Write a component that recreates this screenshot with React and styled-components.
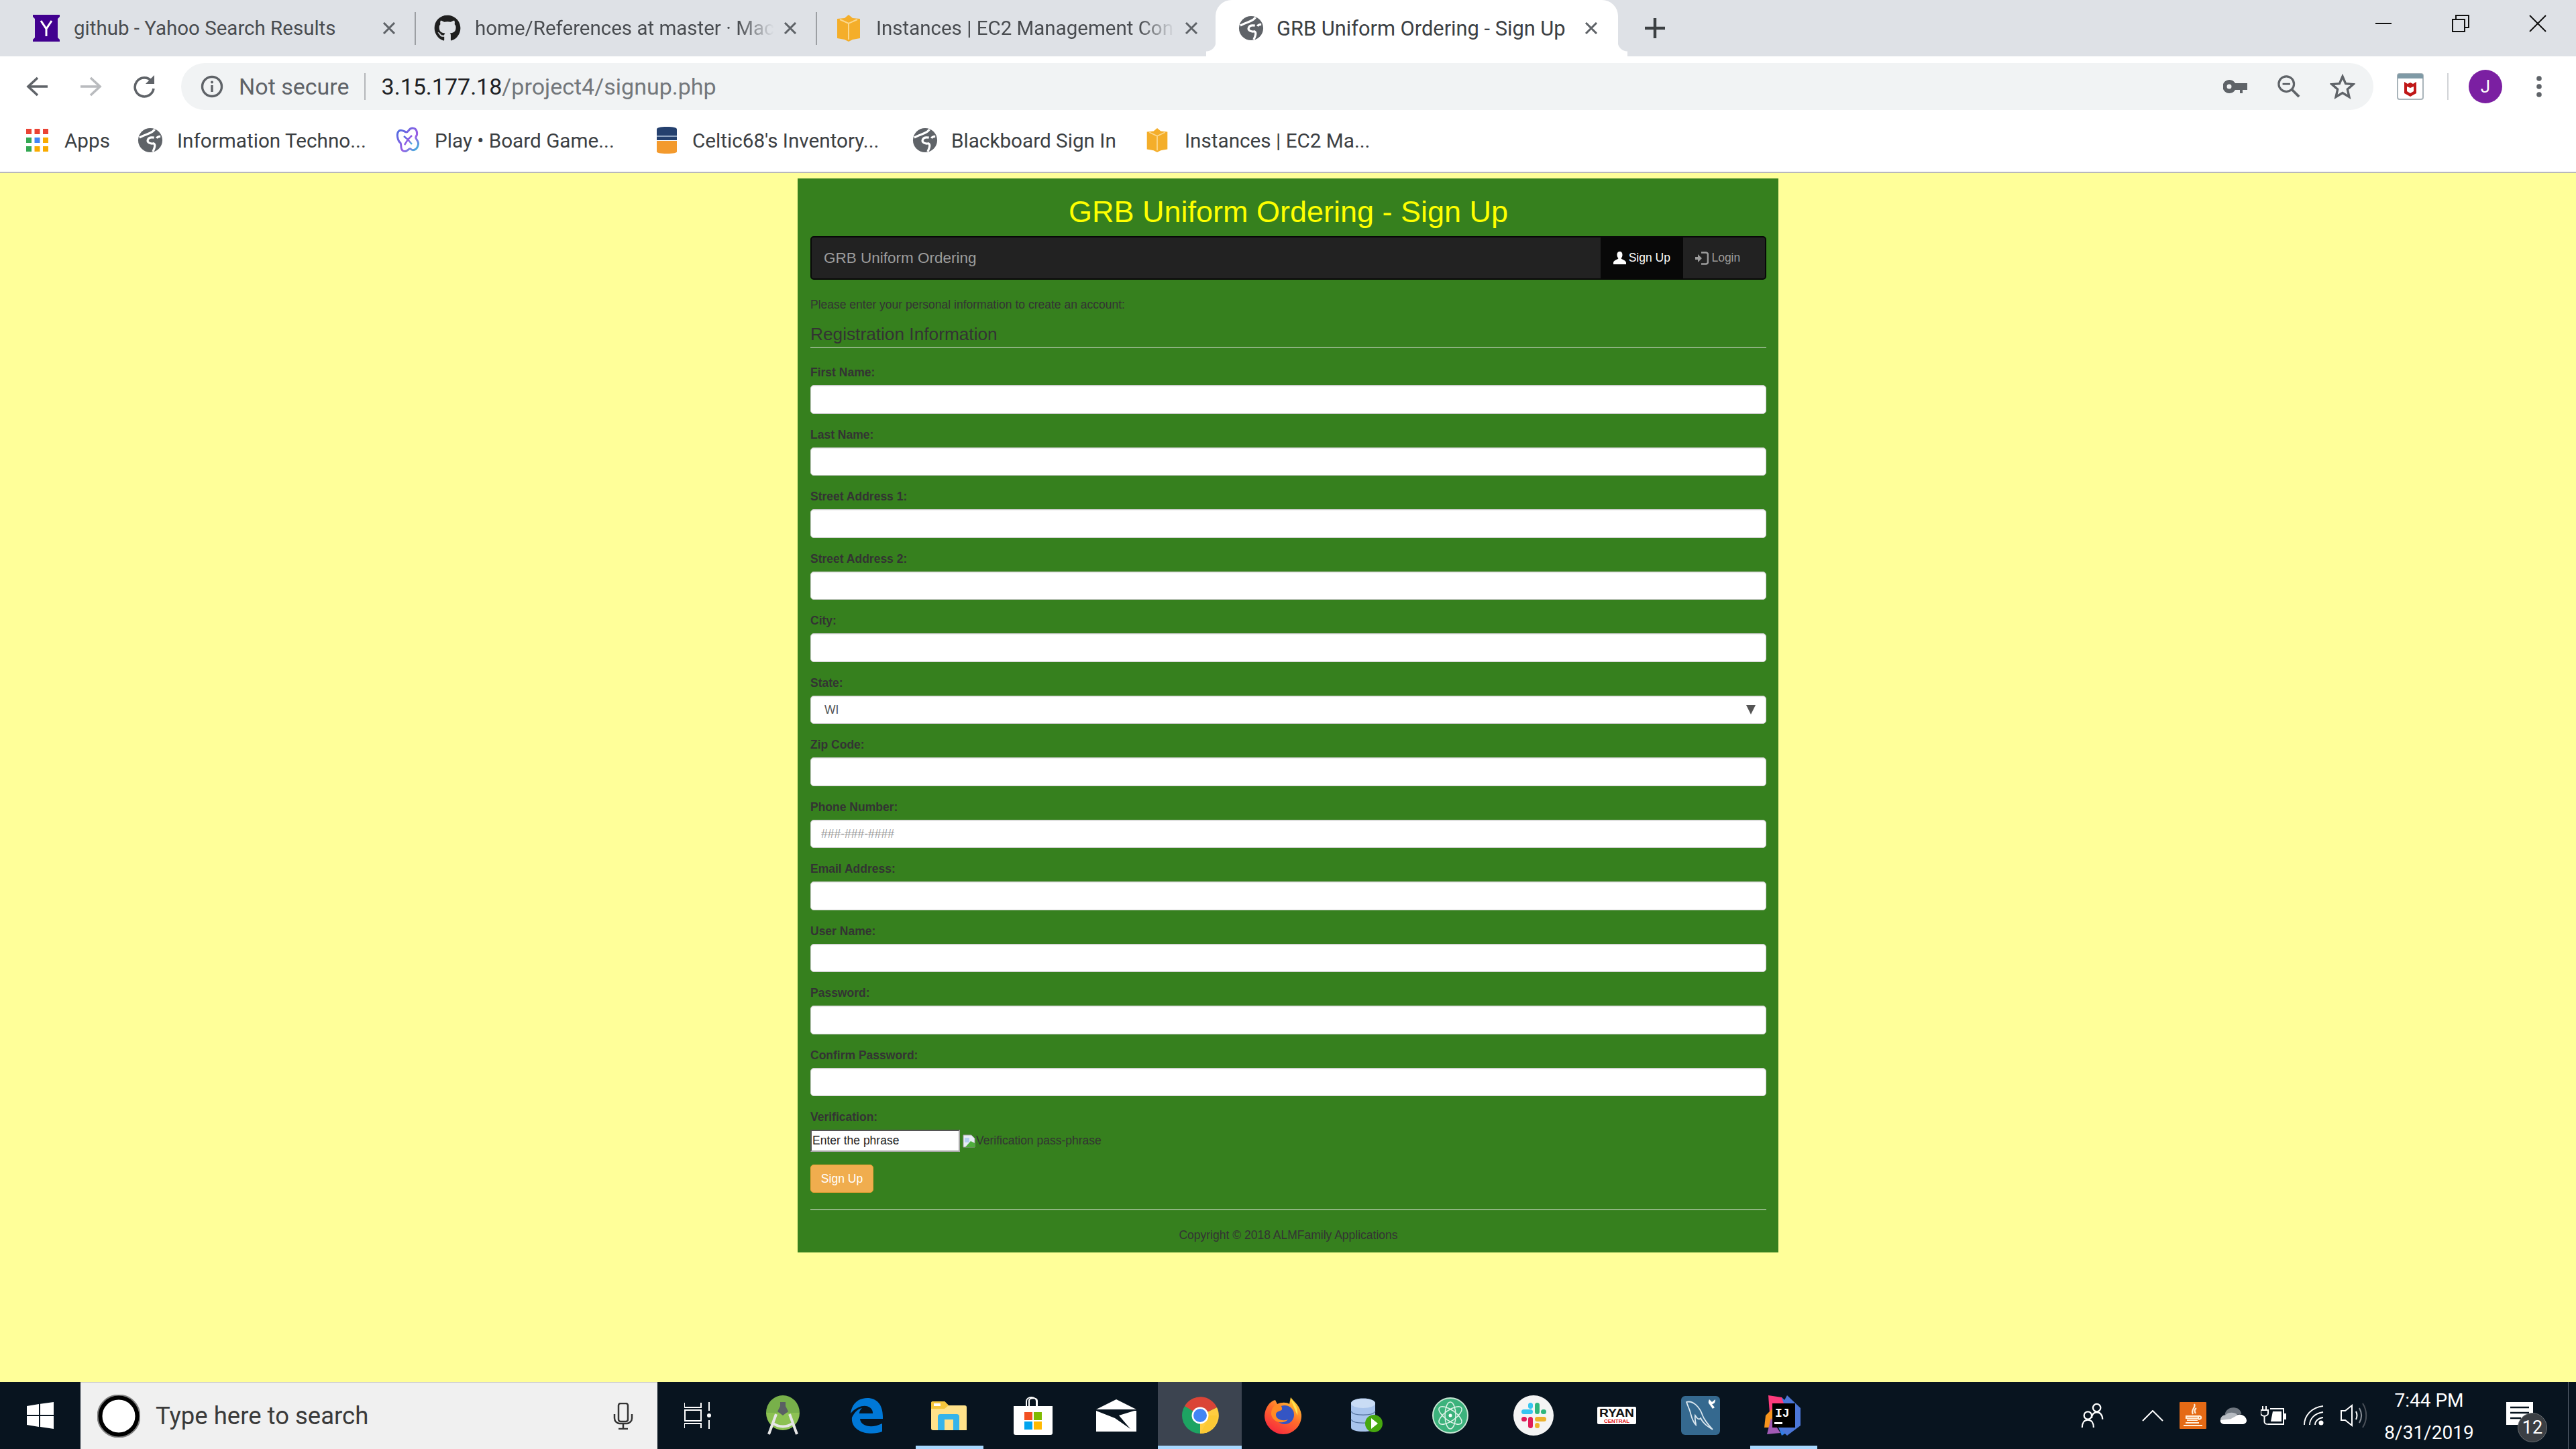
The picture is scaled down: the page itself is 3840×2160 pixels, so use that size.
import React from "react";
import styled, { createGlobalStyle } from "styled-components";
import { FaGithub } from "react-icons/fa";

const GlobalStyle = createGlobalStyle`
  html, body {
    margin: 0;
    padding: 0;
    overflow: hidden;
  }
  * {
    box-sizing: border-box;
  }
`;

const UI_FONT = `Roboto, "Open Sans", sans-serif`;
const WEB_FONT = `"Liberation Sans", Arial, sans-serif`;

const Page = styled.div`
  width: 3840px;
  height: 2160px;
  display: flex;
  flex-direction: column;
  background: #ffff99;
  font-family: ${WEB_FONT};
`;

/* browser chrome */
const TabStrip = styled.div`
  height: 84px;
  flex: none;
  display: flex;
  align-items: center;
  padding-left: 22px;
  background: #dee1e6;
  font-family: ${UI_FONT};
`;

const Tab = styled.div`
  position: relative;
  width: ${p => (p.$active ? "600px" : "596px")};
  height: 84px;
  flex: none;
  display: flex;
  align-items: center;
  padding-left: ${p => (p.$active ? "33px" : "27px")};
  margin-left: ${p => (p.$active ? "-2px" : "0")};
  background: ${p => (p.$active ? "#fff" : "transparent")};
  border-radius: ${p => (p.$active ? "24px 24px 0 0" : "0")};
  z-index: ${p => (p.$active ? 1 : 0)};
  ${p => p.$active && `
    &::before, &::after {
      content: "";
      position: absolute;
      bottom: 0;
      width: 14px;
      height: 22px;
    }
    &::before {
      left: -14px;
      background: radial-gradient(circle at 0 0, transparent 14px, #fff 15px);
    }
    &::after {
      right: -14px;
      background: radial-gradient(circle at 100% 0, transparent 14px, #fff 15px);
    }
  `}
`;

const Favicon = styled.span`
  width: 40px;
  height: 40px;
  flex: none;
  display: flex;
  align-items: center;
  justify-content: center;
  color: #1f1f1f;
`;

const TabTitle = styled.span`
  width: ${p => (p.$active ? "440px" : "446px")};
  margin-left: ${p => (p.$active ? "18px" : "21px")};
  flex: none;
  overflow: hidden;
  white-space: nowrap;
  font-size: ${p => (p.$active ? "30.8px" : "29.5px")};
  color: ${p => (p.$active ? "#3c4043" : "#494c50")};
  ${p => p.$fade && `
    -webkit-mask-image: linear-gradient(to right, #000 88%, transparent 100%);
    mask-image: linear-gradient(to right, #000 88%, transparent 100%);
  `}
`;

const TabClose = styled.span`
  width: 24px;
  height: 24px;
  margin-left: ${p => (p.$active ? "17px" : "12px")};
  flex: none;
  display: flex;
  align-items: center;
  justify-content: center;
`;

const TabDivider = styled.span`
  width: 2px;
  height: 49px;
  flex: none;
  background: #9c9fa3;
`;

const NewTab = styled.span`
  margin-left: 40px;
  display: flex;
`;

const WindowControls = styled.div`
  margin-left: auto;
  align-self: flex-start;
  display: flex;
`;

const WindowButton = styled.span`
  width: 115px;
  height: 70px;
  display: flex;
  align-items: center;
  justify-content: center;
`;

const Toolbar = styled.div`
  height: 90px;
  flex: none;
  display: flex;
  align-items: center;
  padding-left: 15px;
  background: #fff;
  font-family: ${UI_FONT};
`;

const ToolButton = styled.span`
  width: ${p => p.$w || 80}px;
  height: 70px;
  flex: none;
  display: flex;
  align-items: center;
  justify-content: center;
`;

const Omnibox = styled.div`
  width: 3268px;
  height: 70px;
  margin-left: 15px;
  flex: none;
  display: flex;
  align-items: center;
  padding: 0 6px 0 29px;
  border-radius: 35px;
  background: #f1f3f4;
  font-size: 34px;
`;

const NotSecure = styled.span`
  margin-left: 23px;
  color: #5f6368;
`;

const OmniDivider = styled.span`
  width: 2px;
  height: 40px;
  margin: 0 24px 0 22px;
  background: #b4b6b9;
`;

const UrlHost = styled.span`
  color: #202124;
`;

const UrlPath = styled.span`
  color: #73777b;
`;

const OmniActions = styled.div`
  margin-left: auto;
  display: flex;
`;

const ToolDivider = styled.span`
  width: 2px;
  height: 40px;
  background: #d2d4d7;
`;

const Avatar = styled.span`
  width: 50px;
  height: 50px;
  border-radius: 50%;
  display: flex;
  align-items: center;
  justify-content: center;
  background: #7b1fa2;
  color: #fff;
  font-size: 26px;
`;

const Bookmarks = styled.div`
  height: 84px;
  flex: none;
  display: flex;
  align-items: flex-start;
  padding: 0 0 0 39px;
  background: #fff;
  border-bottom: 2px solid #b8b8bb;
  font-family: ${UI_FONT};
`;

const Bookmark = styled.div`
  width: ${p => p.$w}px;
  height: 70px;
  flex: none;
  display: flex;
  align-items: center;
  gap: ${p => p.$gap || 21}px;
  white-space: nowrap;
  font-size: 29.7px;
  color: #3c4043;
`;

/* the web page */
const Main = styled.main`
  flex: 1;
  min-height: 0;
  display: flex;
  justify-content: center;
  align-items: flex-start;
  padding-top: 8px;
`;

const Panel = styled.section`
  width: 1462px;
  padding: 0 18px 12.5px 19px;
  background: #36801e;
  color: #333;
  font-size: 17.5px;
  line-height: 25px;
`;

const Title = styled.h1`
  margin: 0 0 8px;
  padding-top: 21px;
  font-size: 45px;
  line-height: 57px;
  font-weight: normal;
  text-align: center;
  color: #ffff00;
`;

const Navbar = styled.nav`
  height: 65px;
  margin-bottom: 25px;
  display: flex;
  justify-content: space-between;
  background: #222;
  border: 2px solid #080808;
  border-radius: 5px;
`;

const Brand = styled.span`
  padding-left: 18px;
  align-self: center;
  font-size: 22.5px;
  color: #9d9d9d;
`;

const NavLinks = styled.div`
  display: flex;
  padding-right: 18px;
`;

const NavLink = styled.span`
  display: flex;
  align-items: center;
  gap: 4px;
  padding: 0 18.75px;
  background: ${p => (p.$active ? "#080808" : "transparent")};
  color: ${p => (p.$active ? "#fff" : "#9d9d9d")};
`;

const Intro = styled.p`
  margin: 0 0 12.5px;
`;

const Legend = styled.h2`
  margin: 0 0 25px;
  font-size: 26.25px;
  line-height: 37.5px;
  font-weight: normal;
  border-bottom: 1.25px solid #e5e5e5;
`;

const Field = styled.div`
  margin-bottom: 18.75px;
`;

const Label = styled.label`
  display: block;
  margin-bottom: 6.25px;
  font-weight: bold;
`;

const controlStyle = `
  display: block;
  width: 100%;
  height: 42.5px;
  border: 1.25px solid #ccc;
  border-radius: 5px;
  background: #fff;
  box-shadow: inset 0 1px 1px rgba(0, 0, 0, 0.075);
  color: #555;
  font-family: ${WEB_FONT};
  font-size: 17.5px;
  outline: none;
`;

const TextInput = styled.input`
  ${controlStyle}
  padding: 0 15px;
  &::placeholder {
    color: #999;
  }
`;

const SelectWrap = styled.div`
  position: relative;
  &::after {
    content: "";
    position: absolute;
    right: 16px;
    top: 14px;
    border-left: 7px solid transparent;
    border-right: 7px solid transparent;
    border-top: 14px solid #555;
  }
`;

const Select = styled.select`
  ${controlStyle}
  padding: 0 20px;
  appearance: none;
`;

const CaptchaRow = styled.div`
  display: flex;
  align-items: center;
  height: 33px;
`;

const CaptchaInput = styled.input`
  width: 223px;
  height: 33px;
  padding: 0 1px;
  border: 2px inset #a9a9a9;
  background: #fff;
  color: #222;
  font-family: ${WEB_FONT};
  font-size: 17.5px;
  outline: none;
`;

const BrokenImage = styled.span`
  display: flex;
  align-items: center;
  margin-left: 4px;
`;

const SubmitButton = styled.button`
  display: block;
  width: 94px;
  height: 42px;
  padding: 0;
  border: 1.25px solid #eea236;
  border-radius: 5px;
  background: #f0ad4e;
  color: #fff;
  font-family: ${WEB_FONT};
  font-size: 17.5px;
`;

const Rule = styled.hr`
  margin: 25px 0;
  border: 0;
  border-top: 1.25px solid #eee;
`;

const Copyright = styled.footer`
  text-align: center;
`;

/* windows taskbar */
const Taskbar = styled.div`
  height: 100px;
  flex: none;
  display: flex;
  background: #08141f;
  font-family: ${UI_FONT};
`;

const StartButton = styled.span`
  width: 120px;
  flex: none;
  display: flex;
  align-items: center;
  justify-content: center;
`;

const SearchBox = styled.div`
  width: 860px;
  flex: none;
  display: flex;
  align-items: center;
  padding: 0 36px 0 25px;
  background: #f0f0f0;
  border-top: 1px solid #c4c4c4;
  font-size: 36.5px;
  color: #3a3a3a;
`;

const SearchText = styled.span`
  margin-left: 23px;
`;

const SearchMic = styled.span`
  margin-left: auto;
  display: flex;
`;

const TaskItem = styled.div`
  position: relative;
  width: 124.4px;
  flex: none;
  display: flex;
  align-items: center;
  justify-content: center;
  background: ${p => (p.$focused ? "#3c4450" : "transparent")};
  ${p => p.$running && `
    &::after {
      content: "";
      position: absolute;
      left: ${p.$focused ? "0" : "12px"};
      right: ${p.$focused ? "0" : "12px"};
      bottom: 0;
      height: 5px;
      background: #a8d8ff;
    }
  `}
`;

const Tray = styled.div`
  margin-left: auto;
  position: relative;
  display: flex;
  align-items: stretch;
  padding-right: 31px;
`;

const TraySlot = styled.span`
  width: ${p => p.$w || 60}px;
  display: flex;
  align-items: center;
  justify-content: center;
`;

const Clock = styled.div`
  width: 164px;
  padding-top: 4px;
  display: flex;
  flex-direction: column;
  justify-content: center;
  align-items: center;
  font-size: 28px;
  line-height: 48px;
  color: #fff;
`;

const Notifications = styled.span`
  position: relative;
  width: 106px;
  padding-bottom: 6px;
  display: flex;
  align-items: center;
  justify-content: center;
`;

const Badge = styled.span`
  position: absolute;
  left: 50px;
  top: 46px;
  width: 44px;
  height: 44px;
  border-radius: 50%;
  display: flex;
  align-items: center;
  justify-content: center;
  background: #3b3f44;
  border: 1px solid #6a6e72;
  color: #fff;
  font-size: 27px;
`;

const ShowDesktop = styled.span`
  position: absolute;
  right: 11px;
  bottom: 0;
  width: 1px;
  height: 100px;
  background: #5a6470;
`;

/* drawings */
const YahooIcon = () => (
  <svg width="40" height="40" viewBox="0 0 40 40">
    <path d="M0 0h40v3l-3 3v28l3 3v3H0v-3l3-3V6L0 3z" fill="#41008f" />
    <path d="M12 9l8 12 8-12M20 21v11" fill="none" stroke="#fff" strokeWidth="3" />
  </svg>
);

const GlobeIcon = ({ size = 38 }) => (
  <svg width={size} height={size} viewBox="0 0 40 40">
    <circle cx="20" cy="20" r="19" fill="#5f6368" />
    <path d="M3 16c6-4 12-5 16-7 4-2 6-3 8-6M26 16c-5-1-9 0-10 4-1 4 5 6 9 5 3 1 3 5-1 13M36 14c-3 0-5 1-6 3" fill="none" stroke="#fff" strokeWidth="3.4" />
  </svg>
);

const AwsBoxIcon = ({ size = 40 }) => (
  <svg width={size} height={size} viewBox="0 0 40 40">
    <path d="M20 0l6 5 11 1v29l-11 2-6 3-6-3-11-2V6l11-1z" fill="#f4ae2a" />
    <path d="M7 7l13 6 13-6M20 13v24" fill="none" stroke="#fbd88d" strokeWidth="2" />
  </svg>
);

const PlayIcon = () => (
  <svg width="40" height="40" viewBox="0 0 40 40">
    <defs>
      <linearGradient id="playGrad" x1="0" y1="0" x2="1" y2="1">
        <stop offset="0" stopColor="#4a6ee0" />
        <stop offset="0.6" stopColor="#9b5de5" />
        <stop offset="1" stopColor="#2fc4d9" />
      </linearGradient>
    </defs>
    <path d="M6 6c4-3 8 2 11 2 3 0 3-6 9-6 7 0 8 9 5 13-2 3 6 6 3 13-2 7-8 8-11 5-3-2-5 6-11 3-5-3-2-9-4-12C4 21 1 10 6 6z" fill="#fff" stroke="url(#playGrad)" strokeWidth="3" />
    <path d="M13 14l6 5m6-6l-6 6-5 8m5-8l6 7" fill="none" stroke="url(#playGrad)" strokeWidth="2.5" />
  </svg>
);

const CelticIcon = () => (
  <svg width="34" height="40" viewBox="0 0 34 40">
    <path d="M2 4c0-3 5-4 15-4s15 1 15 4v16H2z" fill="#24406e" />
    <rect x="2" y="13" width="30" height="2" fill="#8ea3c0" />
    <path d="M2 21h30v16c0 2-5 3-15 3S2 39 2 37z" fill="#f39a2d" />
  </svg>
);

const AppsIcon = () => {
  const colors = ["#ea4335", "#ea4335", "#ea4335", "#34a853", "#4285f4", "#f9ab00", "#34a853", "#f9ab00", "#f9ab00"];
  return (
    <svg width="33" height="34" viewBox="0 0 33 34">
      {colors.map((c, i) => (
        <rect key={i} x={(i % 3) * 12.5} y={Math.floor(i / 3) * 13} width="8" height="8" fill={c} />
      ))}
    </svg>
  );
};

const CloseX = () => (
  <svg width="20" height="18" viewBox="0 0 20 18">
    <path d="M2 1l16 16M18 1L2 17" stroke="#5f6368" strokeWidth="3" fill="none" />
  </svg>
);

const PlusIcon = () => (
  <svg width="30" height="30" viewBox="0 0 30 30">
    <path d="M15 0v30M0 15h30" stroke="#3c4043" strokeWidth="4.4" />
  </svg>
);

const MinimizeIcon = () => (
  <svg width="26" height="26" viewBox="0 0 26 26">
    <path d="M1 13h24" stroke="#111" strokeWidth="2" />
  </svg>
);

const RestoreIcon = () => (
  <svg width="26" height="26" viewBox="0 0 26 26">
    <path d="M1 7h18v18H1zM6 7V1h19v18h-6" fill="none" stroke="#111" strokeWidth="2" />
  </svg>
);

const WindowCloseIcon = () => (
  <svg width="26" height="26" viewBox="0 0 26 26">
    <path d="M1 1l24 24M25 1L1 25" fill="none" stroke="#111" strokeWidth="2" />
  </svg>
);

const BackIcon = ({ color = "#5f6368" }) => (
  <svg width="33" height="30" viewBox="0 0 33 30">
    <path d="M32 15H4M17 2L3 15l14 13" fill="none" stroke={color} strokeWidth="3.6" />
  </svg>
);

const ForwardIcon = () => (
  <svg width="33" height="30" viewBox="0 0 33 30">
    <path d="M1 15h28M16 2l14 13-14 13" fill="none" stroke="#b9bbbe" strokeWidth="3.6" />
  </svg>
);

const ReloadIcon = () => (
  <svg width="36" height="34" viewBox="0 0 36 34">
    <path d="M29 9a14 14 0 1 0 3 11" fill="none" stroke="#5f6368" strokeWidth="3.6" />
    <path d="M33 0v13H20z" fill="#5f6368" />
  </svg>
);

const InfoIcon = () => (
  <svg width="34" height="34" viewBox="0 0 34 34">
    <circle cx="17" cy="17" r="14.5" fill="none" stroke="#5f6368" strokeWidth="3.4" />
    <path d="M17 15v10" stroke="#5f6368" strokeWidth="3.4" />
    <circle cx="17" cy="10.5" r="2" fill="#5f6368" />
  </svg>
);

const KeyIcon = () => (
  <svg width="36" height="20" viewBox="0 0 36 20">
    <path d="M18 5a10 10 0 1 0 0 10h7v5h4v-5h7V5z" fill="#5f6368" />
    <circle cx="9" cy="10" r="3.500" fill="#f1f3f4" />
  </svg>
);

const ZoomOutIcon = () => (
  <svg width="34" height="34" viewBox="0 0 36 36">
    <circle cx="14" cy="14" r="12" fill="none" stroke="#5f6368" strokeWidth="3.4" />
    <path d="M8 14h12" stroke="#5f6368" strokeWidth="3" />
    <path d="M23 23l11 11" stroke="#5f6368" strokeWidth="4" />
  </svg>
);

const StarIcon = () => (
  <svg width="38" height="38" viewBox="0 0 38 38">
    <path d="M19 4l4.6 10.6 11.4 1-8.7 7.6 2.6 11.2L19 28.5l-9.9 5.9 2.6-11.2L3 15.6l11.4-1z" fill="none" stroke="#5f6368" strokeWidth="3.4" />
  </svg>
);

const McAfeeIcon = () => (
  <svg width="40" height="40" viewBox="0 0 40 40">
    <rect x="1" y="1" width="38" height="38" rx="3" fill="#fff" stroke="#a9b4ba" strokeWidth="2" />
    <path d="M1 4a3 3 0 0 1 3-3h32a3 3 0 0 1 3 3v4H1z" fill="#7f9aa6" />
    <path d="M11 13l5 3 4-2 4 2 5-3v17l-9 5-9-5z" fill="#c01818" />
    <path d="M15 20l5 2 5-2v7l-5 3-5-3z" fill="#fff" />
  </svg>
);

const DotsIcon = () => (
  <svg width="10" height="32" viewBox="0 0 10 32">
    <circle cx="5" cy="4" r="3.800" fill="#5f6368" />
    <circle cx="5" cy="16" r="3.800" fill="#5f6368" />
    <circle cx="5" cy="28" r="3.800" fill="#5f6368" />
  </svg>
);

const UserGlyph = () => (
  <svg width="19" height="19" viewBox="0 0 19 19">
    <path d="M9.5 0c3 0 4 2.2 4 5 0 2.4-1 4-2 5 0 1.500 7.500 3 7.500 6.500V19H0v-2.500C0 13 7.500 11.500 7.500 10c-1-1-2-2.600-2-5 0-2.800 1-5 4-5z" fill="#fff" />
  </svg>
);

const LoginGlyph = () => (
  <svg width="20" height="20" viewBox="0 0 20 20">
    <path d="M0 8h4V4l6 6-6 6v-4H0z" fill="#9d9d9d" />
    <path d="M9 1.500h7a3 3 0 0 1 3 3v11a3 3 0 0 1-3 3H9" fill="none" stroke="#9d9d9d" strokeWidth="2.600" />
  </svg>
);

const BrokenImageIcon = () => (
  <svg width="20" height="20" viewBox="0 0 20 20">
    <path d="M1 1h12l5 5v13H1z" fill="#e8eef5" stroke="#a0a0a0" />
    <path d="M3 5h7v7H3z" fill="#b8d0f0" />
    <path d="M4 19l8-9 6 3v6z" fill="#4fae3c" />
  </svg>
);

const WindowsLogo = () => (
  <svg width="40" height="40" viewBox="0 0 40 40">
    <path d="M0 6l18-3v16H0zM20 2.700L40 0v19H20zM0 21h18v16L0 34zM20 21h20v19l-20-3z" fill="#fff" />
  </svg>
);

const CortanaIcon = () => (
  <svg width="64" height="64" viewBox="0 0 64 64">
    <circle cx="32" cy="32" r="28" fill="#fff" stroke="#000" strokeWidth="7" />
    <circle cx="32" cy="32" r="31.500" fill="none" stroke="#808080" strokeWidth="2" />
  </svg>
);

const MicIcon = () => (
  <svg width="30" height="40" viewBox="0 0 30 40">
    <rect x="8" y="1" width="14" height="27" rx="3" fill="none" stroke="#333" strokeWidth="2.500" />
    <path d="M2 17v6a8 8 0 0 0 8 8h10a8 8 0 0 0 8-8v-6M15 31v8M8 39h14" fill="none" stroke="#333" strokeWidth="2.500" />
  </svg>
);

const TaskViewIcon = () => (
  <svg width="44" height="40" viewBox="0 0 44 40">
    <path d="M0 1v7h25V1M1 12h24v16H1zM0 39v-7h25v7M37 0v13M37 27v13" fill="none" stroke="#fff" strokeWidth="2" />
    <circle cx="37" cy="20" r="3" fill="#fff" />
  </svg>
);

const AndroidStudioIcon = () => (
  <svg width="56" height="60" viewBox="0 0 56 60">
    <path d="M3 26a25 26 0 0 1 50 0z" fill="#78b04a" />
    <path d="M3 26h50a25 26 0 0 1-50 0z" fill="#8cc152" />
    <path d="M24 10h8v6l4 8-8 6-8-6 4-8z" fill="#5a5f63" />
    <path d="M18 28L7 58M38 28l11 30M14 42c8 6 20 6 28 0" fill="none" stroke="#e6e6e6" strokeWidth="4" />
  </svg>
);

const EdgeIcon = () => (
  <svg width="52" height="54" viewBox="0 0 52 54">
    <path d="M3 24C5 8 16 1 28 1c14 0 24 10 23 31H17c1 11 17 15 33 7v12C32 58 3 52 5 30 10 20 15 17 20 16c-3 3-4 5-4 8h20c1-12-18-18-33 0z" fill="#0078d7" />
  </svg>
);

const ExplorerIcon = () => (
  <svg width="54" height="44" viewBox="0 0 54 44">
    <path d="M0 4a3 3 0 0 1 3-3h17l6 6h24a3 3 0 0 1 3 3v34H3a3 3 0 0 1-3-3z" fill="#ffe28a" />
    <path d="M0 4a3 3 0 0 1 3-3h17l6 6-6 5H0z" fill="#f6c63c" />
    <rect x="4" y="4" width="10" height="4" fill="#fff" />
    <path d="M10 44V24a4 4 0 0 1 4-4h24a4 4 0 0 1 4 4v20h-9V28H20v16z" fill="#35b4ea" />
  </svg>
);

const StoreIcon = () => (
  <svg width="58" height="58" viewBox="0 0 58 58">
    <path d="M19 15V8c0-8 15-8 15 0v7M23 15V7c0-5 12-5 12 0v8" fill="none" stroke="#fff" strokeWidth="2" />
    <path d="M0 15h58v40a3 3 0 0 1-3 3H3a3 3 0 0 1-3-3z" fill="#fff" />
    <rect x="16" y="24" width="12" height="12" fill="#f25022" />
    <rect x="30" y="24" width="12" height="12" fill="#7fba00" />
    <rect x="16" y="38" width="12" height="12" fill="#00a4ef" />
    <rect x="30" y="38" width="12" height="12" fill="#ffb900" />
  </svg>
);

const MailIcon = () => (
  <svg width="60" height="48" viewBox="0 0 60 48">
    <path d="M0 15L30 0l30 15H0zM0 17h60v31H0z" fill="#fff" />
    <path d="M0 16h60L34 24l17 20L28 28 0 17z" fill="#08141f" />
  </svg>
);

const ChromeIcon = () => (
  <svg width="56" height="56" viewBox="0 0 56 56">
    <circle cx="28" cy="28" r="27" fill="#1da462" />
    <path d="M28 28L53 16A27 27 0 0 1 28 55z" fill="#ffcd40" />
    <path d="M28 28L5 14A27 27 0 0 1 53 16z" fill="#db4437" />
    <path d="M28 28H53A25 25 0 0 1 28 55L40 34z" fill="#fcc934" />
    <circle cx="28" cy="28" r="12.500" fill="#fff" />
    <circle cx="28" cy="28" r="10" fill="#4285f4" />
  </svg>
);

const FirefoxIcon = () => (
  <svg width="58" height="58" viewBox="0 0 58 58">
    <defs>
      <linearGradient id="foxGrad" x1="0.8" y1="0" x2="0.2" y2="1">
        <stop offset="0" stopColor="#ffd535" />
        <stop offset="0.45" stopColor="#ff6f2b" />
        <stop offset="1" stopColor="#f6223f" />
      </linearGradient>
    </defs>
    <path d="M40 2c6 8 14 12 16 26 1 16-12 29-27 29S1 44 1 29C2 18 8 8 17 6l3 6c6-3 14-3 18 0z" fill="url(#foxGrad)" />
    <circle cx="31" cy="28" r="14" fill="#3455c4" />
    <path d="M16 14c8-4 12 2 11 6-1 3-10 2-9 9 1 6 10 9 18 6-8 9-24 3-25-8 0-6 2-10 5-13z" fill="#ff8a24" />
    <path d="M40 4c8 8 11 16 10 25-3-7-6-14-10-25z" fill="#ffe34e" />
  </svg>
);

const DatabaseIcon = () => (
  <svg width="50" height="52" viewBox="0 0 50 52">
    <path d="M2 8c0-10 36-10 36 0v36c0 8-36 8-36 0z" fill="#a8c4ec" />
    <ellipse cx="20" cy="8" rx="18" ry="7" fill="#c9dcf5" />
    <path d="M2 20c4 7 32 7 36 0M2 32c4 7 32 7 36 0" fill="none" stroke="#55749f" strokeWidth="1.500" />
    <circle cx="36" cy="38" r="13" fill="#46a80f" />
    <path d="M32 30l10 8-10 8z" fill="#fff" />
  </svg>
);

const AtomIcon = () => (
  <svg width="54" height="54" viewBox="0 0 54 54">
    <circle cx="27" cy="27" r="26" fill="#3cb27c" stroke="#c8e6d4" strokeWidth="2" />
    <g fill="none" stroke="#dff3e8" strokeWidth="1.500">
      <ellipse cx="27" cy="27" rx="20" ry="8" transform="rotate(35 27 27)" />
      <ellipse cx="27" cy="27" rx="20" ry="8" transform="rotate(-35 27 27)" />
      <ellipse cx="27" cy="27" rx="20" ry="8" transform="rotate(90 27 27)" />
    </g>
    <circle cx="27" cy="27" r="2.500" fill="#fff" />
  </svg>
);

const SlackIcon = () => (
  <svg width="60" height="60" viewBox="0 0 60 60">
    <circle cx="30" cy="30" r="30" fill="#f4f4f4" />
    <rect x="12" y="21" width="17" height="7" rx="3.500" fill="#36c5f0" />
    <rect x="22" y="11" width="7" height="9" rx="3.500" fill="#36c5f0" />
    <rect x="32" y="11" width="7" height="17" rx="3.500" fill="#2eb67d" />
    <rect x="41" y="21" width="8" height="7" rx="3.500" fill="#2eb67d" />
    <rect x="32" y="32" width="17" height="7" rx="3.500" fill="#ecb22e" />
    <rect x="32" y="41" width="7" height="8" rx="3.500" fill="#ecb22e" />
    <rect x="22" y="32" width="7" height="17" rx="3.500" fill="#e01e5a" />
    <rect x="12" y="32" width="8" height="7" rx="3.500" fill="#e01e5a" />
  </svg>
);

const RyanIcon = () => (
  <svg width="58" height="26" viewBox="0 0 58 26">
    <rect width="58" height="26" rx="2" fill="#fff" />
    <text x="3" y="15" fontFamily="Liberation Sans" fontWeight="bold" fontSize="17" textLength="52" lengthAdjust="spacingAndGlyphs" fill="#111">RYAN</text>
    <text x="29" y="24" fontFamily="Liberation Sans" fontWeight="bold" fontSize="8" textAnchor="middle" fill="#e3101a">CENTRAL</text>
  </svg>
);

const MysqlIcon = () => (
  <svg width="58" height="58" viewBox="0 0 58 58">
    <rect width="58" height="58" rx="6" fill="#35698f" />
    <path d="M8 9c10-3 20 8 24 20 3 8 9 14 15 21-8-5-14-9-18-17-2 3-5 1-8-4-1 6 1 10 1 14-6-6-7-15-9-21z" fill="none" stroke="#dbe7ef" strokeWidth="1.800" />
    <path d="M42 5l4 4 5-4c0 5-2 7-5 7l4 5-3 2-5-7c-2-2-1-5 0-7z" fill="#fff" />
  </svg>
);

const IntellijIcon = () => (
  <svg width="62" height="60" viewBox="0 0 62 60">
    <path d="M28 3l20 19v26L28 60l-8-20z" fill="#2f7fe8" />
    <path d="M36 0l20 19v26L36 60 14 40z" fill="#4b76d8" />
    <path d="M8 0l20 3 6 18-24 6z" fill="#fd3b7c" />
    <path d="M4 30l10-10 4 28H2z" fill="#f7941d" />
    <path d="M6 58l6-24 14 22z" fill="#a25ab5" />
    <rect x="14" y="12" width="34" height="36" fill="#000" />
    <text x="18" y="32" fontFamily="Liberation Mono" fontWeight="bold" fontSize="18" fill="#fff">IJ</text>
    <rect x="17" y="40" width="12" height="3" fill="#fff" />
  </svg>
);

const PeopleIcon = () => (
  <svg width="36" height="38" viewBox="0 0 36 40">
    <g fill="none" stroke="#fff" strokeWidth="2.400">
      <circle cx="25" cy="8" r="6" />
      <path d="M17 24c0-5 3-9 8-9s9 4 9 11" />
      <circle cx="11" cy="20" r="6" />
      <path d="M2 39c0-7 3-12 9-12s9 5 9 12" />
    </g>
  </svg>
);

const ChevronIcon = () => (
  <svg width="32" height="17" viewBox="0 0 32 17">
    <path d="M1 16L16 1l15 15" fill="none" stroke="#fff" strokeWidth="2" />
  </svg>
);

const JavaIcon = () => (
  <svg width="40" height="40" viewBox="0 0 40 40">
    <rect width="40" height="40" rx="1" fill="#e56a15" />
    <path d="M22 3c3 5-6 8-2 15M25 9c-3 2-3 5-1 8M10 21h18v3H10zM28 21c5-1 6 4 0 5M11 27h16M9 31h20M6 35h28" fill="none" stroke="#fff0dd" strokeWidth="2.200" />
  </svg>
);

const CloudIcon = () => (
  <svg width="40" height="26" viewBox="0 0 42 34" preserveAspectRatio="none">
    <path d="M8 16C8 7 16 0 24 2c6 1 9 6 10 12z" fill="#6f7780" />
    <path d="M1 26c0-6 4-10 8-10 4-6 14-6 18-1 6 0 11 5 12 11z" fill="#b7bcc2" />
    <path d="M1 26c-1 5 3 8 7 8h27c4 0 7-3 7-7 0-6-5-12-12-12L17 24z" fill="#fff" />
  </svg>
);

const BatteryIcon = () => (
  <svg width="38" height="28" viewBox="0 0 38 28">
    <path d="M3 0v6M8 0v6" stroke="#fff" strokeWidth="2" />
    <path d="M0 6h11v5c0 2-3 4-5.500 4S0 13 0 11zM5.500 15v8a4 4 0 0 0 4 4" fill="none" stroke="#fff" strokeWidth="2" />
    <path d="M14 4h20v23H10" fill="none" stroke="#fff" strokeWidth="2" />
    <path d="M15 23l3-15h13v15z" fill="#fff" />
    <rect x="35" y="11" width="3" height="9" fill="#fff" />
  </svg>
);

const WifiIcon = () => (
  <svg width="30" height="30" viewBox="0 0 30 30">
    <g fill="none" stroke="#fff" strokeWidth="1.800">
      <path d="M1 29C1 15 12 3 29 1" />
      <path d="M9 29c0-9 7-17 20-19" />
      <path d="M17 29c0-5 4-10 12-11" />
    </g>
    <circle cx="26" cy="26" r="3.500" fill="#fff" />
  </svg>
);

const VolumeIcon = () => (
  <svg width="40" height="38" viewBox="0 0 40 38">
    <path d="M1 12h6l10-8v30L7 26H1z" fill="none" stroke="#fff" strokeWidth="2" />
    <path d="M23 13c2 4 2 8 0 12" fill="none" stroke="#fff" strokeWidth="2" />
    <path d="M28 8c4 7 4 15 0 22" fill="none" stroke="#8b9199" strokeWidth="2" />
    <path d="M33 1c7 11 7 25 0 36" fill="none" stroke="#4a5058" strokeWidth="2" />
  </svg>
);

const NotificationIcon = () => (
  <svg width="40" height="34" viewBox="0 0 40 34">
    <rect width="40" height="34" fill="#fff" />
    <path d="M6 8h28M6 16h28M6 24h16" stroke="#08141f" strokeWidth="2.500" />
  </svg>
);

const formFields = [
  { label: "First Name:" },
  { label: "Last Name:" },
  { label: "Street Address 1:" },
  { label: "Street Address 2:" },
  { label: "City:" },
  { label: "State:", select: true },
  { label: "Zip Code:" },
  { label: "Phone Number:", placeholder: "###-###-####" },
  { label: "Email Address:" },
  { label: "User Name:" },
  { label: "Password:" },
  { label: "Confirm Password:" },
];

const bookmarks = [
  { icon: <AppsIcon />, text: "Apps", w: 166, gap: 24 },
  { icon: <GlobeIcon />, text: "Information Techno...", w: 384 },
  { icon: <PlayIcon />, text: "Play • Board Game...", w: 388, gap: 19 },
  { icon: <CelticIcon />, text: "Celtic68's Inventory...", w: 383 },
  { icon: <GlobeIcon />, text: "Blackboard Sign In", w: 347, gap: 20 },
  { icon: <AwsBoxIcon size={36} />, text: "Instances | EC2 Ma...", w: 340, gap: 23 },
];

const taskItems = [
  { icon: <TaskViewIcon /> },
  { icon: <AndroidStudioIcon /> },
  { icon: <EdgeIcon /> },
  { icon: <ExplorerIcon />, running: true },
  { icon: <StoreIcon /> },
  { icon: <MailIcon /> },
  { icon: <ChromeIcon />, running: true, focused: true },
  { icon: <FirefoxIcon /> },
  { icon: <DatabaseIcon /> },
  { icon: <AtomIcon /> },
  { icon: <SlackIcon /> },
  { icon: <RyanIcon /> },
  { icon: <MysqlIcon /> },
  { icon: <IntellijIcon />, running: true },
];

const App = () => {
  return (
    <Page>
      <GlobalStyle />
      <TabStrip>
        <Tab>
          <Favicon><YahooIcon /></Favicon>
          <TabTitle>github - Yahoo Search Results</TabTitle>
          <TabClose><CloseX /></TabClose>
        </Tab>
        <TabDivider />
        <Tab>
          <Favicon><FaGithub size={40} /></Favicon>
          <TabTitle $fade>home/References at master · Mac</TabTitle>
          <TabClose><CloseX /></TabClose>
        </Tab>
        <TabDivider />
        <Tab>
          <Favicon><AwsBoxIcon /></Favicon>
          <TabTitle $fade>Instances | EC2 Management Con</TabTitle>
          <TabClose><CloseX /></TabClose>
        </Tab>
        <Tab $active>
          <Favicon><GlobeIcon /></Favicon>
          <TabTitle $active>GRB Uniform Ordering - Sign Up</TabTitle>
          <TabClose $active><CloseX /></TabClose>
        </Tab>
        <NewTab><PlusIcon /></NewTab>
        <WindowControls>
          <WindowButton><MinimizeIcon /></WindowButton>
          <WindowButton><RestoreIcon /></WindowButton>
          <WindowButton><WindowCloseIcon /></WindowButton>
        </WindowControls>
      </TabStrip>

      <Toolbar>
        <ToolButton><BackIcon /></ToolButton>
        <ToolButton><ForwardIcon /></ToolButton>
        <ToolButton><ReloadIcon /></ToolButton>
        <Omnibox>
          <InfoIcon />
          <NotSecure>Not secure</NotSecure>
          <OmniDivider />
          <UrlHost>3.15.177.18</UrlHost>
          <UrlPath>/project4/signup.php</UrlPath>
          <OmniActions>
            <ToolButton><KeyIcon /></ToolButton>
            <ToolButton><ZoomOutIcon /></ToolButton>
            <ToolButton><StarIcon /></ToolButton>
          </OmniActions>
        </Omnibox>
        <ToolButton $w={110}><McAfeeIcon /></ToolButton>
        <ToolDivider />
        <ToolButton $w={110}><Avatar>J</Avatar></ToolButton>
        <ToolButton $w={50}><DotsIcon /></ToolButton>
      </Toolbar>

      <Bookmarks>
        {bookmarks.map(b => (
          <Bookmark key={b.text} $w={b.w} $gap={b.gap}>{b.icon}<span>{b.text}</span></Bookmark>
        ))}
      </Bookmarks>

      <Main>
        <Panel>
          <Title>GRB Uniform Ordering - Sign Up</Title>
          <Navbar>
            <Brand>GRB Uniform Ordering</Brand>
            <NavLinks>
              <NavLink $active><UserGlyph />Sign Up</NavLink>
              <NavLink><LoginGlyph />Login</NavLink>
            </NavLinks>
          </Navbar>
          <Intro>Please enter your personal information to create an account:</Intro>
          <Legend>Registration Information</Legend>
          {formFields.map(f => (
            <Field key={f.label}>
              <Label>{f.label}</Label>
              {f.select ? (
                <SelectWrap>
                  <Select defaultValue="WI"><option>WI</option></Select>
                </SelectWrap>
              ) : (
                <TextInput type="text" placeholder={f.placeholder} />
              )}
            </Field>
          ))}
          <Field>
            <Label>Verification:</Label>
            <CaptchaRow>
              <CaptchaInput type="text" defaultValue="Enter the phrase" />
              <BrokenImage><BrokenImageIcon />Verification pass-phrase</BrokenImage>
            </CaptchaRow>
          </Field>
          <SubmitButton>Sign Up</SubmitButton>
          <Rule />
          <Copyright>Copyright © 2018 ALMFamily Applications</Copyright>
        </Panel>
      </Main>

      <Taskbar>
        <StartButton><WindowsLogo /></StartButton>
        <SearchBox>
          <CortanaIcon />
          <SearchText>Type here to search</SearchText>
          <SearchMic><MicIcon /></SearchMic>
        </SearchBox>
        {taskItems.map((t, i) => (
          <TaskItem key={i} $running={t.running} $focused={t.focused}>{t.icon}</TaskItem>
        ))}
        <Tray>
          <TraySlot $w={120}><PeopleIcon /></TraySlot>
          <TraySlot><ChevronIcon /></TraySlot>
          <TraySlot><JavaIcon /></TraySlot>
          <TraySlot><CloudIcon /></TraySlot>
          <TraySlot><BatteryIcon /></TraySlot>
          <TraySlot><WifiIcon /></TraySlot>
          <TraySlot><VolumeIcon /></TraySlot>
          <Clock><span>7:44 PM</span><span>8/31/2019</span></Clock>
          <Notifications>
            <NotificationIcon />
            <Badge>12</Badge>
          </Notifications>
          <ShowDesktop />
        </Tray>
      </Taskbar>
    </Page>
  );
};

export default App;
